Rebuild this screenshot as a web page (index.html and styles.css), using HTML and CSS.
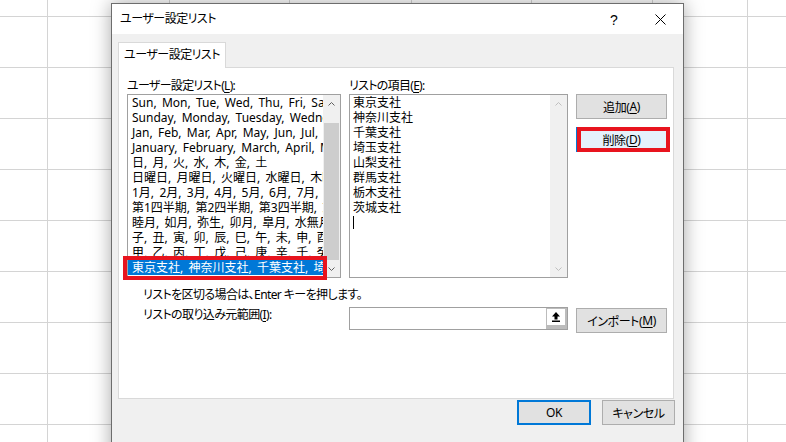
FILE: index.html
```html
<!DOCTYPE html>
<html lang="ja">
<head>
  <meta charset="UTF-8">
  <title>ユーザー設定リスト</title>
  <link rel="stylesheet" href="styles.css">
</head>
<body>

  <div class="dialog">
    <!-- Title bar -->
    <div class="titlebar">
      <span class="title">ユーザー設定リスト</span>
      <span class="tb-btn help">?</span>
      <span class="tb-btn close">
        <svg width="11" height="11" viewBox="0 0 11 11"><path d="M0.5 0.5 L10.5 10.5 M10.5 0.5 L0.5 10.5" stroke="#000" stroke-width="1" fill="none"/></svg>
      </span>
    </div>

    <div class="dialog-body">
      <div class="tab">ユーザー設定リスト</div>

      <div class="panel">
        <div class="lists">
          <div class="col">
            <div class="label">ユーザー設定リスト(<u>L</u>):</div>
            <div class="listbox">
              <ul class="items">
                <li>Sun, Mon, Tue, Wed, Thu, Fri, Sat</li>
                <li>Sunday, Monday, Tuesday, Wednesday, Thursday, Friday, Saturday</li>
                <li>Jan, Feb, Mar, Apr, May, Jun, Jul, Aug, Sep, Oct, Nov, Dec</li>
                <li>January, February, March, April, May, June, July, August</li>
                <li>日, 月, 火, 水, 木, 金, 土</li>
                <li>日曜日, 月曜日, 火曜日, 水曜日, 木曜日, 金曜日, 土曜日</li>
                <li>1月, 2月, 3月, 4月, 5月, 6月, 7月, 8月, 9月, 10月, 11月, 12月</li>
                <li>第1四半期, 第2四半期, 第3四半期, 第4四半期</li>
                <li>睦月, 如月, 弥生, 卯月, 皐月, 水無月, 文月, 葉月, 長月</li>
                <li>子, 丑, 寅, 卯, 辰, 巳, 午, 未, 申, 酉, 戌, 亥</li>
                <li>甲, 乙, 丙, 丁, 戊, 己, 庚, 辛, 壬, 癸</li>
                <li class="selected">東京支社, 神奈川支社, 千葉支社, 埼玉支社, 山梨支社</li>
              </ul>
              <div class="scrollbar">
                <div class="arrow"><svg width="7" height="4" viewBox="0 0 7 4"><path d="M0.5 3.5 L3.5 0.5 L6.5 3.5" stroke="#606060" fill="none"/></svg></div>
                <div class="track"><div class="thumb"></div></div>
                <div class="arrow"><svg width="7" height="4" viewBox="0 0 7 4"><path d="M0.5 0.5 L3.5 3.5 L6.5 0.5" stroke="#606060" fill="none"/></svg></div>
              </div>
            </div>
          </div>

          <div class="col">
            <div class="label">リストの項目(<u>E</u>):</div>
            <div class="listbox">
              <ul class="items entries">
                <li>東京支社</li>
                <li>神奈川支社</li>
                <li>千葉支社</li>
                <li>埼玉支社</li>
                <li>山梨支社</li>
                <li>群馬支社</li>
                <li>栃木支社</li>
                <li>茨城支社</li>
                <li><span class="caret"></span></li>
              </ul>
              <div class="scrollbar disabled">
                <div class="arrow"><svg width="7" height="4" viewBox="0 0 7 4"><path d="M0.5 3.5 L3.5 0.5 L6.5 3.5" stroke="#bfbfbf" fill="none"/></svg></div>
                <div class="track"></div>
                <div class="arrow"><svg width="7" height="4" viewBox="0 0 7 4"><path d="M0.5 0.5 L3.5 3.5 L6.5 0.5" stroke="#bfbfbf" fill="none"/></svg></div>
              </div>
            </div>
          </div>

          <div class="col side-buttons">
            <div class="btn">追加(<u>A</u>)</div>
            <div class="btn btn-hover">削除(<u>D</u>)</div>
          </div>
        </div>

        <p class="hint">リストを区切る場合は、Enter キーを押します。</p>

        <div class="import-row">
          <div class="import-label">リストの取り込み元範囲(<u>I</u>):</div>
          <div class="ref-input">
            <div class="collapse">
              <div class="collapse-face">
                <svg width="8" height="10" viewBox="0 0 8 10"><path d="M4 0 L8 4.5 L5.5 4.5 L5.5 7.5 L2.5 7.5 L2.5 4.5 L0 4.5 Z" fill="#000"/><rect x="0" y="8.5" width="8" height="1.5" fill="#000"/></svg>
              </div>
            </div>
          </div>
          <div class="btn import-btn">インポート(<u>M</u>)</div>
        </div>
      </div>

      <div class="footer">
        <div class="btn btn-default">OK</div>
        <div class="btn btn-cancel">キャンセル</div>
      </div>
    </div>

    <!-- red annotation frames -->
    <div class="mark mark-list"></div>
    <div class="mark mark-delete"></div>
  </div>

</body>
</html>
```

FILE: styles.css
```css
body {
  margin: 0;
  width: 786px;
  height: 442px;
  overflow: hidden;
  position: relative;
  font-family: "Noto Sans", "Noto Sans CJK JP", sans-serif;
  font-feature-settings: "palt";
  font-size: 12px;
  color: #000;
  background-color: #fff;
  background-image:
    linear-gradient(#d4d4d4, #d4d4d4),
    linear-gradient(#d4d4d4, #d4d4d4),
    linear-gradient(#d4d4d4, #d4d4d4),
    linear-gradient(#d4d4d4, #d4d4d4),
    linear-gradient(#d4d4d4, #d4d4d4),
    linear-gradient(#d4d4d4, #d4d4d4),
    linear-gradient(#d4d4d4, #d4d4d4),
    repeating-linear-gradient(to bottom, transparent 0, transparent 16px, #d4d4d4 16px, #d4d4d4 17px, transparent 17px, transparent 51px);
  background-size: 1px 100%, 1px 100%, 1px 100%, 1px 100%, 1px 100%, 1px 100%, 1px 100%, 100% 100%;
  background-position: 47px 0, 169px 0, 289px 0, 411px 0, 531px 0, 652px 0, 747px 0, 0 0;
  background-repeat: no-repeat;
}
u {
  text-decoration: underline;
  text-underline-offset: 2px;
}

/* dialog window */
.dialog {
  position: absolute;
  left: 111px;
  top: 3px;
  width: 573px;
  height: 460px;
  box-sizing: border-box;
  border: 1px solid #6d6d6d;
  background-color: #f0f0f0;
  box-shadow: 0 0 18px rgba(0, 0, 0, 0.35);
}
.titlebar {
  height: 30px;
  display: flex;
  align-items: center;
  padding-left: 8px;
  background-color: #fff;
}
.title {
  flex: 1;
  line-height: 16px;
  letter-spacing: -0.5px;
}
.tb-btn {
  width: 46px;
  height: 30px;
  display: flex;
  align-items: center;
  justify-content: center;
}
.help {
  font-size: 14px;
  font-family: "Liberation Sans", sans-serif;
  padding-top: 1px;
  box-sizing: border-box;
}

.dialog-body {
  padding: 8px 9px 0 6px;
}
.tab {
  position: relative;
  z-index: 1;
  width: 108px;
  height: 26px;
  box-sizing: border-box;
  margin-bottom: -1px;
  border: 1px solid #d9d9d9;
  border-bottom: none;
  background-color: #fff;
  line-height: 24px;
  text-align: center;
  letter-spacing: -0.5px;
}
.panel {
  height: 332px;
  box-sizing: border-box;
  border: 1px solid #d9d9d9;
  background-color: #fff;
  padding: 10px 0 0 8px;
}

.lists {
  display: grid;
  grid-template-columns: 214px 219px 91px;
  column-gap: 8px;
}
.label {
  height: 16px;
  line-height: 16px;
  letter-spacing: -0.7px;
}
.listbox {
  height: 184px;
  box-sizing: border-box;
  border: 1px solid #a0a0a0;
  display: flex;
  background-color: #fff;
}
.items {
  flex: 1;
  min-width: 0;
  margin: 0;
  padding: 0;
  list-style: none;
  overflow: hidden;
}
.items li {
  height: 15px;
  line-height: 15px;
  padding-left: 4px;
  white-space: nowrap;
  overflow: hidden;
  word-spacing: 2.2px;
}
.items .selected {
  background-color: #0078d7;
  color: #fff;
}
.entries li {
  padding-left: 3px;
}
.caret {
  display: inline-block;
  width: 1px;
  height: 13px;
  margin-top: 1px;
  vertical-align: top;
  background-color: #000;
}

.scrollbar {
  width: 17px;
  display: flex;
  flex-direction: column;
  background-color: #f0f0f0;
}
.scrollbar .arrow {
  height: 17px;
  display: flex;
  align-items: center;
  justify-content: center;
}
.scrollbar .track {
  flex: 1;
  display: flex;
  flex-direction: column;
  padding-top: 11px;
}
.thumb {
  flex: 1;
  margin: 0 1px;
  background-color: #cdcdcd;
}

/* buttons */
.btn {
  height: 25px;
  box-sizing: border-box;
  border: 1px solid #adadad;
  background-color: #e1e1e1;
  display: flex;
  align-items: center;
  justify-content: center;
  letter-spacing: -0.4px;
}
.side-buttons {
  padding-top: 16px;
  display: flex;
  flex-direction: column;
  gap: 8px;
}
.btn-hover {
  background-color: #e5f1fb;
  border-color: #0078d7;
}
.btn-default {
  width: 74px;
  border: 2px solid #0078d7;
}
.btn-cancel {
  width: 73px;
}

.hint {
  margin: 9px 0 0 16px;
  line-height: 16px;
  letter-spacing: -0.6px;
}
.import-row {
  display: grid;
  grid-template-columns: 214px 219px 91px;
  column-gap: 8px;
  align-items: start;
  margin-top: 4px;
}
.import-label {
  padding-left: 16px;
  line-height: 16px;
  letter-spacing: -0.6px;
}
.ref-input {
  height: 23px;
  box-sizing: border-box;
  border: 1px solid #a0a0a0;
  background-color: #fff;
  display: flex;
  justify-content: flex-end;
}
.collapse {
  width: 21px;
  box-sizing: border-box;
  padding: 1px 2px 4px 1px;
  background-color: #bcbcbc;
}
.collapse-face {
  height: 100%;
  background-color: #fff;
  display: flex;
  align-items: center;
  justify-content: center;
}
.import-btn {
  margin-top: 1px;
}

.footer {
  display: flex;
  justify-content: flex-end;
  gap: 11px;
  margin: 1px -1px 0 0;
}

/* red annotation frames */
.mark {
  position: absolute;
  box-sizing: border-box;
  border: 4px solid #e8141e;
}
.mark-list {
  left: 11px;
  top: 252px;
  width: 204px;
  height: 24px;
}
.mark-delete {
  left: 465px;
  top: 123px;
  width: 93px;
  height: 25px;
}
```
